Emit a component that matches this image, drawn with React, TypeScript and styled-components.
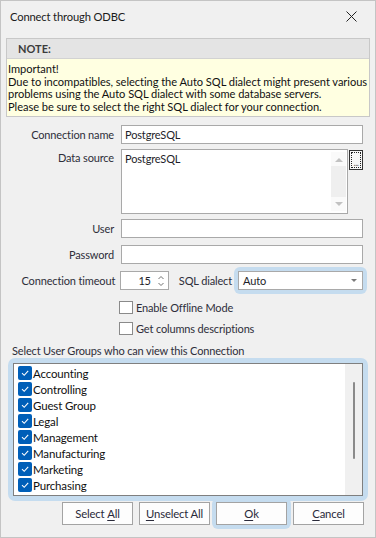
import React from 'react';
import styled, { createGlobalStyle } from 'styled-components';

const FONT = `Lato, "Noto Sans", sans-serif`;

const Global = createGlobalStyle`
  html, body { margin: 0; padding: 0; background: #f0f0f0; }
  body { font-family: ${FONT}; font-size: 11px; letter-spacing: -0.15px; line-height: 15px; color: #222; }
  * { box-sizing: border-box; }
`;

const Window = styled.div`
  width: 376px;
  height: 538px;
  border: 1px solid #c4c4c4;
  background: #f0f0f0;
  display: flex;
  flex-direction: column;
`;

const TitleBar = styled.div`
  height: 31px;
  display: flex;
  align-items: center;
  justify-content: space-between;
  padding: 0 18px 0 9px;
`;

const Title = styled.span`
  color: #1b1b1b;
  font-size: 11.2px;
`;

const NoteBox = styled.div`
  margin: 6px 5px 0 5px;
  border: 1px solid #c8c8c8;
`;

const NoteHeader = styled.div`
  height: 20px;
  background: #e4e4e4;
  border-bottom: 1px solid #d2d2d2;
  display: flex;
  align-items: center;
  padding-left: 11px;
  font-weight: bold;
  color: #3c3c3c;
  letter-spacing: 0;
`;

const NoteBody = styled.div`
  background: #ffffe1;
  padding: 4px 1px 3px 1px;
  line-height: 12.5px;
  font-size: 11.1px;
  letter-spacing: -0.05px;
  color: #111;
  white-space: nowrap;
`;

const Form = styled.div`
  display: flex;
  flex-direction: column;
  padding-right: 12px;
`;

const Row = styled.div<{ $mt: number; $top?: boolean }>`
  display: flex;
  align-items: ${(p) => (p.$top ? 'flex-start' : 'center')};
  margin-top: ${(p) => p.$mt}px;
`;

const Label = styled.label<{ $w?: number }>`
  width: ${(p) => p.$w ?? 113}px;
  text-align: right;
  margin-right: 7px;
  color: #2e2e3a;
  white-space: nowrap;
`;

const TextInput = styled.div`
  flex: 1;
  height: 19px;
  background: #fff;
  border: 1px solid #a9a9a9;
  padding: 0 3px;
  display: flex;
  align-items: center;
  color: #1e1e2a;
`;

const MemoBox = styled.div`
  width: 227px;
  height: 65px;
  background: #fff;
  border: 1px solid #a9a9a9;
  display: flex;
`;

const MemoText = styled.div`
  flex: 1;
  padding: 1px 3px;
  color: #1e1e2a;
`;

const MemoScroll = styled.div`
  width: 15px;
  margin: 2px 1px 2px 0;
  background: #efefef;
  display: flex;
  flex-direction: column;
  justify-content: space-between;
`;

const ScrollArrow = styled.div`
  height: 14px;
  background: #fafafa;
  display: flex;
  align-items: center;
  justify-content: center;
`;

const EllipsisButton = styled.div`
  width: 14px;
  height: 20px;
  margin-left: 1px;
  margin-top: 1px;
  border: 1px solid #333;
  background: #f7f7f7;
  padding: 1px;
`;

const FocusRect = styled.div`
  width: 100%;
  height: 100%;
  border: 1px dotted #222;
  display: flex;
  align-items: flex-end;
  justify-content: center;
  font-size: 9px;
  line-height: 8px;
  letter-spacing: -0.5px;
  color: #666;
`;

const SpinBox = styled.div`
  width: 49px;
  height: 19px;
  background: #fff;
  border: 1px solid #a9a9a9;
  display: flex;
  align-items: center;
  justify-content: flex-end;
  gap: 7px;
  padding-right: 4px;
  color: #1e1e2a;
`;

const InlineLabel = styled.span`
  margin: 0 6px 0 10px;
  color: #2e2e3a;
  white-space: nowrap;
`;

const Glow = styled.div<{ $pad: number }>`
  padding: ${(p) => p.$pad}px;
  margin: -${(p) => p.$pad}px;
  background: #c5dcef;
  border-radius: ${(p) => p.$pad + 2}px;
  display: flex;
`;

const Combo = styled.div`
  width: 125px;
  height: 19px;
  background: #fff;
  border: 1px solid #a9a9a9;
  display: flex;
  align-items: center;
  justify-content: space-between;
  padding: 0 5px 0 4px;
  color: #1e1e2a;
`;

const CheckRow = styled.label<{ $mt: number }>`
  display: flex;
  align-items: center;
  gap: 3px;
  margin-top: ${(p) => p.$mt}px;
  padding-left: 118px;
  color: #2e2e3a;
`;

const EmptyBox = styled.span`
  width: 14px;
  height: 13px;
  background: #fff;
  border: 1px solid #8a8a8a;
`;

const GroupLabel = styled.div`
  margin-top: 7px;
  padding-left: 11px;
  color: #2e2e3a;
`;

const ListArea = styled.div`
  margin: 0 7px;
  display: flex;
`;

const ListGlow = styled.div`
  flex: 1;
  padding: 5px;
  background: #c5dcef;
  border-radius: 7px;
  display: flex;
`;

const ListBox = styled.div`
  flex: 1;
  height: 133px;
  background: #fff;
  border: 1px solid #7f7f7f;
  display: flex;
`;

const Items = styled.div`
  flex: 1;
  padding: 1px 0 0 4px;
  display: flex;
  flex-direction: column;
`;

const Item = styled.div`
  height: 16px;
  display: flex;
  align-items: center;
  gap: 1px;
  font-size: 11.5px;
  color: #101010;
`;

const CheckedBox = styled.span`
  width: 14px;
  height: 14px;
  border-radius: 2px;
  background: #005fb8;
  display: flex;
  align-items: center;
  justify-content: center;
`;

const ListScroll = styled.div`
  width: 17px;
  background: #f0f0f0;
  display: flex;
  justify-content: center;
  padding-top: 18px;
`;

const Thumb = styled.div`
  width: 2px;
  height: 77px;
  background: #8a8a8a;
  border-radius: 1px;
  margin-left: 1px;
`;

const ButtonRow = styled.div`
  display: flex;
  justify-content: flex-end;
  gap: 6px;
  margin-top: 1px;
  padding-right: 11px;
`;

const Button = styled.div`
  width: 71px;
  height: 23px;
  background: #fdfdfd;
  border: 1px solid #a3a3a3;
  display: flex;
  align-items: center;
  justify-content: center;
  color: #2a2a3a;
  font-size: 11.3px;
  u { text-decoration-thickness: 1px; text-underline-offset: 2px; }
`;

const Check = () => (
  <svg width="10" height="10" viewBox="0 0 10 10">
    <path d="M2 5.2 L4.2 7.3 L8.2 2.8" stroke="#fff" strokeWidth="1.1" fill="none" />
  </svg>
);

const groups = [
  'Accounting',
  'Controlling',
  'Guest Group',
  'Legal',
  'Management',
  'Manufacturing',
  'Marketing',
  'Purchasing',
];

export default function App() {
  return (
    <>
      <Global />
      <Window>
        <TitleBar>
          <Title>Connect through ODBC</Title>
          <svg width="11" height="11" viewBox="0 0 11 11">
            <path d="M0.5 0.5 L10.5 10.5 M10.5 0.5 L0.5 10.5" stroke="#222" strokeWidth="1" />
          </svg>
        </TitleBar>
        <NoteBox>
          <NoteHeader>NOTE:</NoteHeader>
          <NoteBody>
            Important!
            <br />
            Due to incompatibles, selecting the Auto SQL dialect might present various
            <br />
            problems using the Auto SQL dialect with some database servers.
            <br />
            Please be sure to select the right SQL dialect for your connection.
          </NoteBody>
        </NoteBox>
        <Form>
          <Row $mt={8}>
            <Label>Connection name</Label>
            <TextInput>PostgreSQL</TextInput>
          </Row>
          <Row $mt={5} $top>
            <Label style={{ marginTop: 1 }}>Data source</Label>
            <MemoBox>
              <MemoText>PostgreSQL</MemoText>
              <MemoScroll>
                <ScrollArrow>
                  <svg width="8" height="5" viewBox="0 0 8 5">
                    <path d="M0 5 L4 1 L8 5 Z" fill="#c2c2c2" />
                  </svg>
                </ScrollArrow>
                <ScrollArrow>
                  <svg width="8" height="5" viewBox="0 0 8 5">
                    <path d="M0 0 L4 4 L8 0 Z" fill="#c2c2c2" />
                  </svg>
                </ScrollArrow>
              </MemoScroll>
            </MemoBox>
            <EllipsisButton>
              <FocusRect>...</FocusRect>
            </EllipsisButton>
          </Row>
          <Row $mt={5}>
            <Label>User</Label>
            <TextInput />
          </Row>
          <Row $mt={7}>
            <Label>Password</Label>
            <TextInput />
          </Row>
          <Row $mt={7}>
            <Label $w={115}>Connection timeout</Label>
            <SpinBox style={{ marginLeft: -2 }}>
              <span>15</span>
              <svg width="6" height="14" viewBox="0 0 6 14">
                <path d="M0.5 5 L3 2.5 L5.5 5" stroke="#707070" strokeWidth="1" fill="none" />
                <path d="M0.5 9 L3 11.5 L5.5 9" stroke="#707070" strokeWidth="1" fill="none" />
              </svg>
            </SpinBox>
            <InlineLabel>SQL dialect</InlineLabel>
            <Glow $pad={4}>
              <Combo>
                <span>Auto</span>
                <svg width="6" height="3" viewBox="0 0 6 3">
                  <path d="M0 0 L3 3 L6 0 Z" fill="#7a7a7a" />
                </svg>
              </Combo>
            </Glow>
          </Row>
        </Form>
        <CheckRow $mt={10}>
          <EmptyBox />
          Enable Offline Mode
        </CheckRow>
        <CheckRow $mt={6}>
          <EmptyBox />
          Get columns descriptions
        </CheckRow>
        <GroupLabel>Select User Groups who can view this Connection</GroupLabel>
        <ListArea>
          <ListGlow>
            <ListBox>
              <Items>
                {groups.map((g) => (
                  <Item key={g}>
                    <CheckedBox>
                      <Check />
                    </CheckedBox>
                    {g}
                  </Item>
                ))}
              </Items>
              <ListScroll>
                <Thumb />
              </ListScroll>
            </ListBox>
          </ListGlow>
        </ListArea>
        <ButtonRow>
          <Button>
            Select&nbsp;<u>A</u>ll
          </Button>
          <Button>
            <u>U</u>nselect All
          </Button>
          <Glow $pad={4}>
            <Button>
              <u>O</u>k
            </Button>
          </Glow>
          <Button>
            <u>C</u>ancel
          </Button>
        </ButtonRow>
      </Window>
    </>
  );
}
